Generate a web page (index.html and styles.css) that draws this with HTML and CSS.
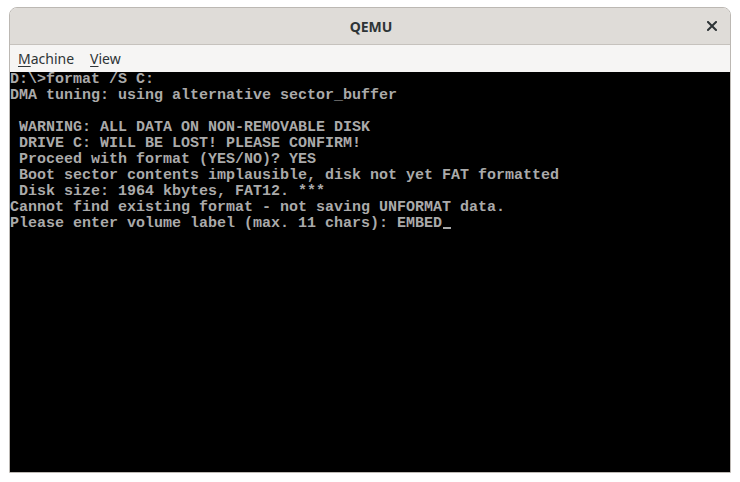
FILE: index.html
```html
<!DOCTYPE html>
<html>
<head>
<meta charset="utf-8">
<title>QEMU</title>
<link rel="stylesheet" href="styles.css">
</head>
<body>
<div class="window">
  <div class="titlebar">
    <span class="title">QEMU</span>
    <button class="close" aria-label="Close">
      <svg width="10" height="10" viewBox="0 0 10 10"><path d="M1 1 L9 9 M9 1 L1 9" stroke="#2e3436" stroke-width="2" stroke-linecap="square" fill="none"/></svg>
    </button>
  </div>
  <div class="menubar">
    <span class="menu"><u>M</u>achine</span>
    <span class="menu"><u>V</u>iew</span>
  </div>
  <pre class="screen">D:\>format /S C:
DMA tuning: using alternative sector_buffer

 WARNING: ALL DATA ON NON-REMOVABLE DISK
 DRIVE C: WILL BE LOST! PLEASE CONFIRM!
 Proceed with format (YES/NO)? YES
 Boot sector contents implausible, disk not yet FAT formatted
 Disk size: 1964 kbytes, FAT12. ***
Cannot find existing format - not saving UNFORMAT data.
Please enter volume label (max. 11 chars): EMBED<span class="cursor"></span></pre>
</div>
</body>
</html>
```
FILE: styles.css
```css
html, body {
  margin: 0;
  padding: 0;
  background: #ffffff;
}
body {
  padding: 7px 0 0 9px;
}
.window {
  width: 720px;
  border: 1px solid #bcb8b3;
  border-radius: 8px 8px 0 0;
  overflow: hidden;
  background: #f6f5f4;
}
.titlebar {
  position: relative;
  height: 36px;
  background: #dfdcd8;
  border-bottom: 1px solid #c6c2bd;
  display: flex;
  align-items: center;
  justify-content: center;
}
.title {
  font-family: "Noto Sans", "DejaVu Sans", sans-serif;
  font-weight: 700;
  font-size: 14px;
  color: #2e3436;
  margin-left: 2px;
}
.close {
  position: absolute;
  right: 13px;
  top: 13px;
  width: 10px;
  height: 10px;
  padding: 0;
  border: 0;
  background: transparent;
  display: flex;
}
.menubar {
  height: 27px;
  display: flex;
  align-items: center;
  gap: 16px;
  padding-left: 8px;
  background: #f6f5f4;
  font-family: "Noto Sans", "DejaVu Sans", sans-serif;
  font-size: 14px;
  color: #2e3436;
}
.menu u {
  text-decoration-thickness: 1px;
  text-underline-offset: 2px;
}
.screen {
  margin: 0;
  height: 400px;
  background: #000000;
  color: #aaaaaa;
  font-family: "Liberation Mono", "DejaVu Sans Mono", monospace;
  font-size: 15px;
  line-height: 16px;
  font-weight: 700;
  white-space: pre;
  overflow: hidden;
}
.cursor {
  display: inline-block;
  width: 8px;
  height: 2px;
  margin-left: 1px;
  background: #aaaaaa;
  vertical-align: -2px;
}
```
